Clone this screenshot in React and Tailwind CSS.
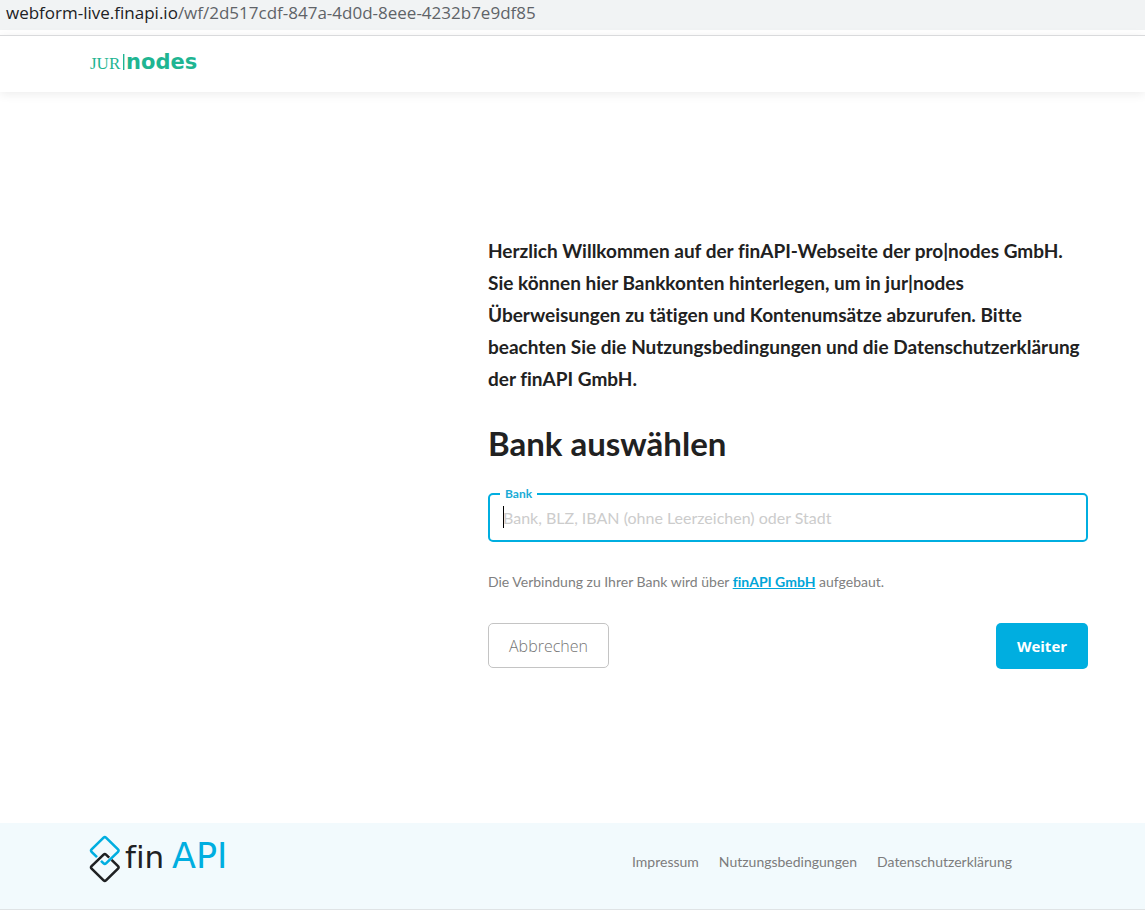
import React, { useState } from 'react';

const footerLinks = ['Impressum', 'Nutzungsbedingungen', 'Datenschutzerklärung'];

const JurNodesLogo = () => (
  <svg width="112" height="28" viewBox="0 0 112 28" role="img" aria-label="JUR|nodes" fill="#1fb592">
    <text x="2" y="19" fontFamily="Liberation Serif, serif" fontSize="17">JUR</text>
    <rect x="35" y="4" width="1.4" height="16" />
    <text x="38" y="19" fontFamily="DejaVu Sans, sans-serif" fontWeight="700" fontSize="21">nodes</text>
  </svg>
);

const FinApiLogo = () => (
  <svg width="154" height="50" viewBox="0 0 154 50" role="img" aria-label="finAPI" fill="none">
    <g strokeWidth="2.6" strokeLinejoin="round">
      <path d="M8 22.2 L2.6 16.8 Q1.4 15.6 2.6 14.4 L14.6 2.6 Q15.8 1.5 17 2.6 L29 14.4 Q30.2 15.6 29 16.8 L17 28.4 Q15.8 29.5 14.6 28.4 L12 25.8" stroke="#00aee0" />
      <path d="M22.6 24.8 L29 31.2 Q30.2 32.4 29 33.6 L17 45.4 Q15.8 46.5 14.6 45.4 L2.6 33.6 Q1.4 32.4 2.6 31.2 L14.6 19.6 Q15.8 18.5 17 19.6 L20.2 22.6" stroke="#1f2123" />
    </g>
    <text x="36" y="33" fontFamily="DejaVu Sans, sans-serif" fontSize="31" fill="#1f2123">fin</text>
    <text x="83" y="33" fontFamily="DejaVu Sans, sans-serif" fontSize="35" fill="#00aee0">API</text>
  </svg>
);

const App = () => {
  const [bank, setBank] = useState('');

  return (
    <div className="min-h-screen flex flex-col bg-white text-[#212121] font-['Lato',sans-serif] [font-variant-ligatures:none]">
      <div className="h-[30px] bg-[#f1f3f4] px-[6px] text-[17px] leading-[26px] font-['Open_Sans',sans-serif] text-[#5f6368] whitespace-nowrap overflow-hidden">
        <span className="text-[#202124]">webform-live.finapi.io</span>/wf/2d517cdf-847a-4d0d-8eee-4232b7e9df85
      </div>

      <header className="mt-[5px] h-[57px] border-t border-[#d9dadc] px-[88px] flex items-center shadow-[0_2px_10px_rgba(0,0,0,0.08)]">
        <JurNodesLogo />
      </header>

      <main className="flex-1 flex justify-end px-[57px] pt-[143px] pb-12">
        <form className="w-full max-w-[600px]" onSubmit={(e) => e.preventDefault()}>
          <p className="text-[19px] leading-[32px] font-bold">
            Herzlich Willkommen auf der finAPI-Webseite der pro|nodes GmbH. Sie können hier Bankkonten
            hinterlegen, um in jur|nodes Überweisungen zu tätigen und Kontenumsätze abzurufen. Bitte
            beachten Sie die Nutzungsbedingungen und die Datenschutzerklärung der finAPI GmbH.
          </p>

          <h1 className="mt-[26px] text-[33px] leading-[44px] font-bold">Bank auswählen</h1>

          {/* Outlined field, the legend cuts the border */}
          <fieldset className="relative mt-[21px] border-2 border-[#00aee0] rounded-[5px] px-[13px] pb-2">
            <legend className="-ml-[3px] px-[5px] text-[12px] leading-4 font-bold text-[#1aabd6]">
              <label htmlFor="bank">Bank</label>
            </legend>
            <input
              id="bank"
              type="text"
              value={bank}
              onChange={(e) => setBank(e.target.value)}
              placeholder="Bank, BLZ, IBAN (ohne Leerzeichen) oder Stadt"
              className="block w-full h-[30px] text-[16px] outline-none caret-transparent placeholder:text-[#cccccc]"
            />
            <span className="absolute left-[13px] top-1 h-[22px] w-px bg-black" />
          </fieldset>

          <p className="mt-[30px] text-[14px] leading-5 text-[#808080]">
            Die Verbindung zu Ihrer Bank wird über{' '}
            <a href="#finapi" className="font-bold text-[#00a5d8] underline">finAPI GmbH</a> aufgebaut.
          </p>

          <div className="mt-[31px] flex items-start justify-between">
            <button
              type="button"
              className="h-[45px] px-5 border border-[#c4c4c4] rounded-[5px] text-[16px] font-light font-['Open_Sans',sans-serif] text-[#757575]"
            >
              Abbrechen
            </button>
            <button
              type="submit"
              className="h-[46px] min-w-[92px] px-5 rounded-[5px] bg-[#00aee0] text-[15px] font-bold font-['Open_Sans',sans-serif] text-white"
            >
              Weiter
            </button>
          </div>
        </form>
      </main>

      <footer className="h-[87px] bg-[#f2fafd] border-b border-[#dfe3e5] pl-[89px] pr-[133px] flex items-start justify-between">
        <div className="pt-3">
          <FinApiLogo />
        </div>
        <nav className="pt-[29px] flex gap-5 text-[14px] leading-5 text-[#7c7c7c]">
          {footerLinks.map((name) => (
            <a key={name} href={`#${name.toLowerCase()}`}>{name}</a>
          ))}
        </nav>
      </footer>
    </div>
  );
};

export default App;
